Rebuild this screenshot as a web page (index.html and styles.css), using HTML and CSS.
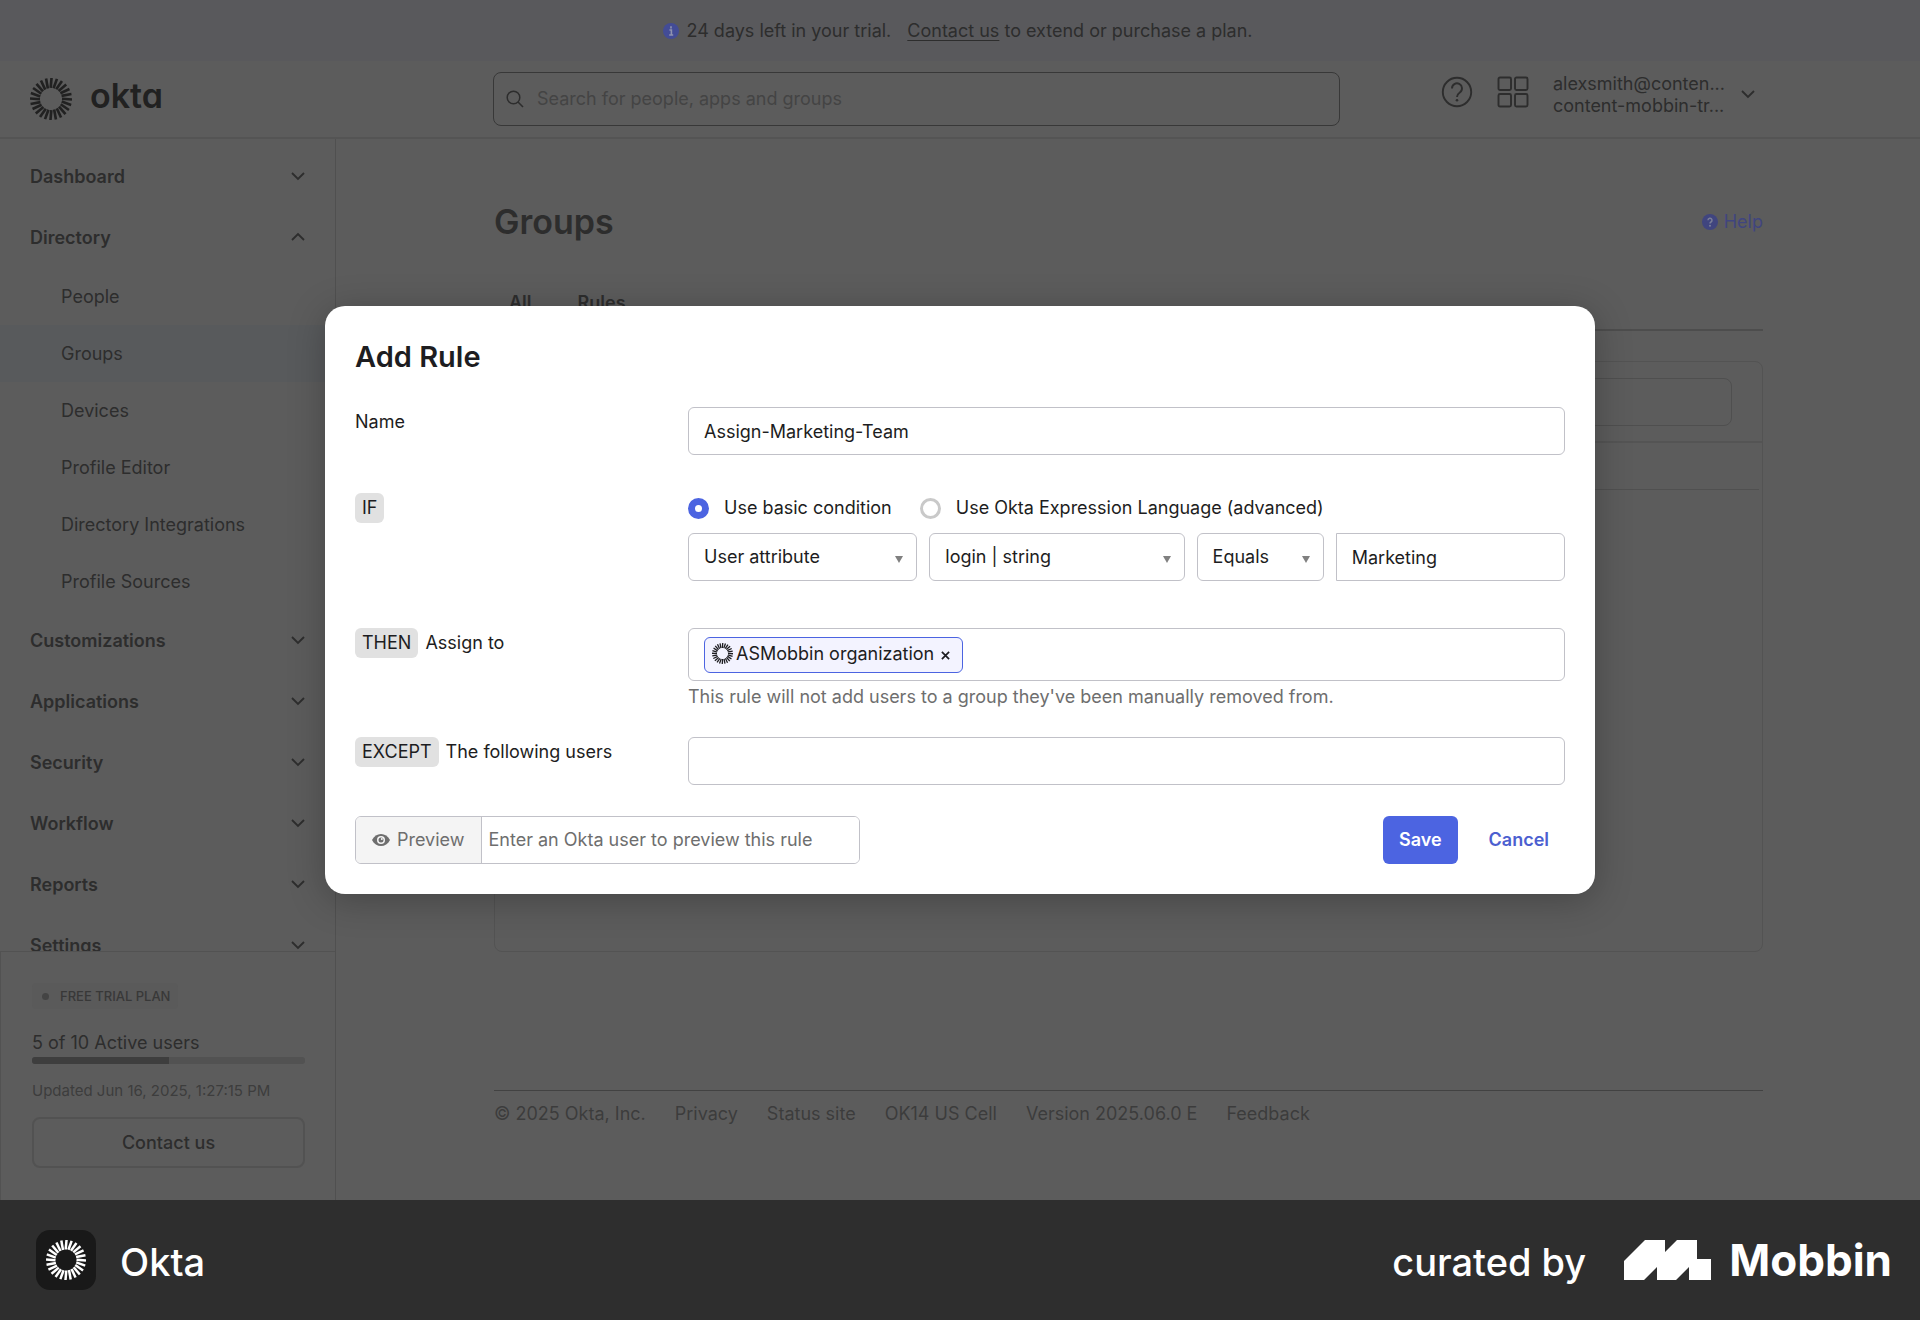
FILE: index.html
```html
<!DOCTYPE html>
<html lang="en">
<head>
<meta charset="utf-8">
<title>Groups - Okta</title>
<link rel="stylesheet" href="styles.css">
</head>
<body>
<svg class="defs" width="0" height="0" aria-hidden="true">
  <defs>
    <g id="ray"><path d="M20.500 0L19.700 9.500" fill="none" stroke="currentColor" stroke-width="2.500"/></g>
    <g id="rays"><use href="#ray"/><use href="#ray" transform="rotate(15 20 20)"/><use href="#ray" transform="rotate(30 20 20)"/><use href="#ray" transform="rotate(45 20 20)"/><use href="#ray" transform="rotate(60 20 20)"/><use href="#ray" transform="rotate(75 20 20)"/></g>
    <symbol id="sun" viewBox="0 0 40 40">
      <use href="#rays"/><use href="#rays" transform="rotate(90 20 20)"/><use href="#rays" transform="rotate(180 20 20)"/><use href="#rays" transform="rotate(270 20 20)"/>
    </symbol>
    <symbol id="down" viewBox="0 0 14 14"><path d="M1 3l6 6 6-6" fill="none" stroke="currentColor" stroke-width="1.800"/></symbol>
    <symbol id="up" viewBox="0 0 14 14"><path d="M1 9l6-6 6 6" fill="none" stroke="currentColor" stroke-width="1.800"/></symbol>
  </defs>
</svg>
<div class="screen">
  <div class="app">
    <div class="banner">
      <svg class="banner-icon" viewBox="0 0 16 16"><circle cx="8" cy="8" r="8" fill="currentColor"/><path d="M8 3.200v2.200M6.400 7H8.400v5M6.200 12h4" stroke="#8f93b0" stroke-width="1.600" fill="none"/></svg>
      <span>24 days left in your trial.</span>
      <span class="banner-more"><a href="#">Contact us</a> to extend or purchase a plan.</span>
    </div>
    <header class="header">
      <a class="brand" href="#"><svg class="brand-mark"><use href="#sun"/></svg><span class="brand-name">okta</span></a>
      <div class="search">
        <svg class="search-icon" viewBox="0 0 18 18"><circle cx="7.500" cy="7.500" r="6.300" fill="none" stroke="currentColor" stroke-width="1.500"/><path d="M12 12l5 5" stroke="currentColor" stroke-width="1.600"/></svg>
        <input type="text" aria-label="Search" placeholder="Search for people, apps and groups">
      </div>
      <div class="tools">
        <button class="tool" aria-label="Help"><svg class="tool-icon" viewBox="0 0 32 32"><circle cx="16" cy="16" r="14.200" fill="none" stroke="currentColor" stroke-width="1.900"/><path d="M11 12.500a5 5 0 1 1 7.800 4c-2 1.400-2.800 2.200-2.800 4.500" fill="none" stroke="currentColor" stroke-width="1.900"/><circle cx="16" cy="24.300" r="1.300" fill="currentColor"/></svg></button>
        <button class="tool" aria-label="Apps"><svg class="tool-icon" viewBox="0 0 32 32" fill="none" stroke="currentColor" stroke-width="1.900"><rect x="1.500" y="1.500" width="12.500" height="12.500" rx="1.500"/><rect x="18" y="1.500" width="12.500" height="12.500" rx="1.500"/><rect x="1.500" y="18" width="12.500" height="12.500" rx="1.500"/><rect x="18" y="18" width="12.500" height="12.500" rx="1.500"/></svg></button>
        <button class="account"><span class="account-text"><span>alexsmith@conten...</span><span>content-mobbin-tr...</span></span><svg class="chev"><use href="#down"/></svg></button>
      </div>
    </header>
    <div class="body">
      <aside class="sidebar">
        <nav class="nav">
          <button class="nav-top">Dashboard<svg class="chev"><use href="#down"/></svg></button>
          <button class="nav-top">Directory<svg class="chev"><use href="#up"/></svg></button>
          <a class="nav-sub" href="#">People</a>
          <a class="nav-sub active" href="#">Groups</a>
          <a class="nav-sub" href="#">Devices</a>
          <a class="nav-sub" href="#">Profile Editor</a>
          <a class="nav-sub" href="#">Directory Integrations</a>
          <a class="nav-sub" href="#">Profile Sources</a>
          <button class="nav-top">Customizations<svg class="chev"><use href="#down"/></svg></button>
          <button class="nav-top">Applications<svg class="chev"><use href="#down"/></svg></button>
          <button class="nav-top">Security<svg class="chev"><use href="#down"/></svg></button>
          <button class="nav-top">Workflow<svg class="chev"><use href="#down"/></svg></button>
          <button class="nav-top">Reports<svg class="chev"><use href="#down"/></svg></button>
          <button class="nav-top">Settings<svg class="chev"><use href="#down"/></svg></button>
        </nav>
        <section class="plan">
          <div class="plan-chip"><i class="dot"></i>FREE TRIAL PLAN</div>
          <div class="plan-users">5 of 10 Active users</div>
          <div class="meter"><div class="meter-fill" style="width:50%"></div></div>
          <div class="plan-date">Updated Jun 16, 2025, 1:27:15 PM</div>
          <button class="plan-btn">Contact us</button>
        </section>
      </aside>
      <main class="main">
        <div class="title-row">
          <h1>Groups</h1>
          <a class="help" href="#"><svg class="help-icon" viewBox="0 0 16 16"><circle cx="8" cy="8" r="8" fill="currentColor"/><path d="M6 6.300a2 2 0 1 1 3 1.700c-.8.500-1 .8-1 1.600" fill="none" stroke="#7a7e98" stroke-width="1.500"/><circle cx="8" cy="11.700" r="1" fill="#7a7e98"/></svg>Help</a>
        </div>
        <div class="tabs"><a href="#">All</a><a href="#">Rules</a></div>
        <section class="list">
          <div class="list-tools"><input type="text" aria-label="Search rules"></div>
          <div class="list-head"></div>
        </section>
        <footer class="foot"><span>© 2025 Okta, Inc.</span><a href="#">Privacy</a><a href="#">Status site</a><span>OK14 US Cell</span><span>Version 2025.06.0 E</span><a href="#">Feedback</a></footer>
      </main>
    </div>
  </div>
  <div class="overlay">
    <form class="modal" role="dialog" aria-labelledby="rule-title">
      <h2 id="rule-title">Add Rule</h2>
      <div class="row row-name">
        <label class="row-label" for="name">Name</label>
        <input class="field" id="name" type="text" value="Assign-Marketing-Team">
      </div>
      <div class="row row-if">
        <div class="row-label"><span class="key">IF</span></div>
        <div class="stack">
          <div class="radios">
            <label><input type="radio" name="cond" checked>Use basic condition</label>
            <label><input type="radio" name="cond">Use Okta Expression Language (advanced)</label>
          </div>
          <div class="conds">
            <select class="field" aria-label="Attribute type"><option>User attribute</option></select>
            <select class="field" aria-label="Attribute"><option>login | string</option></select>
            <select class="field" aria-label="Operator"><option>Equals</option></select>
            <input class="field field-value" type="text" aria-label="Value" value="Marketing">
          </div>
        </div>
      </div>
      <div class="row row-then">
        <div class="row-label"><span class="key">THEN</span><label for="groups">Assign to</label></div>
        <div class="stack">
          <div class="field tagbox">
            <span class="tag"><svg class="tag-mark"><use href="#sun"/></svg>ASMobbin organization<button type="button" class="tag-x" aria-label="Remove"><svg viewBox="0 0 10 10"><path d="M1 1l8 8M9 1l-8 8" stroke="currentColor" stroke-width="1.900"/></svg></button></span>
            <input id="groups" type="text">
          </div>
          <p class="hint">This rule will not add users to a group they've been manually removed from.</p>
        </div>
      </div>
      <div class="row row-except">
        <div class="row-label"><span class="key">EXCEPT</span><label for="except">The following users</label></div>
        <input class="field" id="except" type="text">
      </div>
      <div class="actions">
        <div class="preview">
          <button type="button"><svg class="eye" viewBox="0 0 18 12"><path d="M0 6C2 2 5.300 0 9 0s7 2 9 6c-2 4-5.300 6-9 6S2 10 0 6z" fill="currentColor"/><circle cx="9" cy="6" r="4" fill="#f4f4f4"/><circle cx="9" cy="6" r="2.500" fill="currentColor"/><circle cx="9.800" cy="5" r="1" fill="#f4f4f4"/></svg>Preview</button>
          <input type="text" aria-label="Preview user" placeholder="Enter an Okta user to preview this rule">
        </div>
        <div class="buttons"><button type="button" class="save">Save</button><button type="button" class="cancel">Cancel</button></div>
      </div>
    </form>
  </div>
</div>
<div class="credit">
  <div class="credit-app"><span class="credit-icon"><svg><use href="#sun"/></svg></span><span class="credit-text">Okta</span></div>
  <div class="credit-by"><span class="credit-text">curated by</span><svg class="mobbin" viewBox="0 0 87 40"><path d="M0 21L21 0H41V12L53 0H73V19H87V40H65V27L52 40H33V27L20 40H0z" fill="#fff"/></svg><strong>Mobbin</strong></div>
</div>
</body>
</html>
```
FILE: styles.css
```css
* { box-sizing: border-box; }
body {
  margin: 0;
  min-height: 100vh;
  display: flex;
  flex-direction: column;
  font-family: Inter, "Liberation Sans", sans-serif;
  font-size: 18px;
  line-height: 22px;
  color: #1d1d21;
  background: #2e2e2e;
}
button, input, select { font: inherit; color: inherit; margin: 0; }
button { border: 0; background: none; padding: 0; }
a { color: inherit; text-decoration: none; }
h1, h2, p { margin: 0; }
svg { display: block; flex: none; }
.defs { position: absolute; }

.screen { position: relative; flex: 1; display: flex; }
.app { flex: 1; min-width: 0; display: flex; flex-direction: column; background: #5c5c5c; color: #2d2d2d; }

.banner { height: 61px; display: flex; align-items: center; justify-content: center; padding-right: 4px; background: #59595c; }
.banner-icon { width: 16px; height: 16px; margin-right: 7px; color: #434c96; }
.banner-more { margin-left: 16px; }
.banner a { text-decoration: underline; text-underline-offset: 3px; }

.header { height: 78px; display: grid; grid-template-columns: 463px minmax(0, 847px) 1fr; align-items: center; padding: 0 157px 0 30px; border-bottom: 2px solid #545454; }
.brand { display: flex; align-items: center; gap: 18px; color: #212121; }
.brand-mark { width: 42px; height: 42px; }
.brand-name { font-size: 34px; font-weight: 600; line-height: 36px; padding-bottom: 6px; font-feature-settings: "cv11"; }
.search { display: flex; align-items: center; gap: 13px; height: 54px; padding: 0 12px; border: 1px solid #383838; border-radius: 8px; }
.search-icon { width: 18px; height: 18px; }
.search input { flex: 1; min-width: 0; border: 0; background: none; padding: 0; outline: 0; }
.search input::placeholder { color: #444; opacity: 1; }
.tools { display: flex; justify-content: flex-end; align-items: center; padding: 0 8px 14px 0; }
.tool { margin-right: 24px; }
.tool-icon { width: 32px; height: 32px; }
.account { display: flex; align-items: center; gap: 16px; text-align: left; padding-top: 6px; }
.account-text { display: flex; flex-direction: column; }
.chev { width: 14px; height: 14px; }

.body { flex: 1; display: flex; min-height: 0; }
.sidebar { width: 336px; flex: none; display: flex; flex-direction: column; border-right: 1px solid #505050; }
.nav { flex: 1 1 0; min-height: 0; overflow: hidden; padding-top: 7px; }
.nav-top { display: flex; align-items: center; justify-content: space-between; width: 100%; height: 61px; padding: 0 30px; font-weight: 600; }
.nav-sub { display: flex; align-items: center; height: 57px; padding-left: 61px; }
.nav-sub.active { background: #585a5c; }
.plan { border: 1px solid #525252; border-width: 1px 0 0 1px; padding: 31px 30px 32px 31px; }
.plan-chip { display: flex; width: fit-content; align-items: center; gap: 11px; height: 26px; padding: 0 8px 0 10px; border-radius: 4px; background: #5a5a5a; font-size: 13px; font-weight: 500; color: #383838; }
.dot { width: 7px; height: 7px; border-radius: 50%; background: #444; }
.plan-users { margin-top: 23px; }
.meter { height: 7px; margin-top: 3px; border-radius: 3px; background: #525252; overflow: hidden; }
.meter-fill { height: 100%; background: #3e3e3e; }
.plan-date { margin-top: 16px; font-size: 15px; color: #3d3d3d; }
.plan-btn { width: 100%; height: 51px; margin-top: 15px; border: 2px solid #525252; border-radius: 8px; font-weight: 500; }

.main { flex: 1; min-width: 0; padding: 0 157px 0 158px; display: flex; flex-direction: column; }
.title-row { display: flex; align-items: center; justify-content: space-between; padding-top: 61px; }
h1 { font-size: 34px; line-height: 44px; font-weight: 600; }
.help { display: flex; align-items: center; gap: 6px; color: #40457f; }
.help-icon { width: 16px; height: 16px; }
.tabs { display: flex; gap: 46px; margin-top: 48px; padding: 0 15px 15px; font-weight: 600; border-bottom: 2px solid #4d4d4d; }
.list { height: 591px; margin-top: 30px; border: 1px solid #535353; border-radius: 8px; }
.list-tools { height: 81px; padding: 16px 30px; border-bottom: 2px solid #545454; }
.list-tools input { display: block; width: 100%; height: 48px; border: 1px solid #4f4f4f; border-radius: 8px; background: none; }
.list-head { height: 47px; margin-right: 3px; border-bottom: 1px solid #505050; }
.foot { display: flex; gap: 29px; margin-top: 138px; padding-top: 12px; border-top: 1px solid #424242; color: #3c3c3c; }

.overlay { position: absolute; inset: 0; display: flex; align-items: center; justify-content: center; }
.modal { width: 1270px; max-width: 96%; padding: 30px; border-radius: 20px; background: #fff; box-shadow: 0 6px 36px rgba(0, 0, 0, .25); }
h2 { font-size: 29px; line-height: 42px; font-weight: 600; }
.row { display: grid; grid-template-columns: 333px minmax(0, 1fr); align-items: start; }
.row-label { display: flex; align-items: center; gap: 7px; height: 30px; }
.key { display: flex; align-items: center; height: 30px; padding: 0 7px; border-radius: 6px; background: #e1e1e1; }
.field { width: 100%; height: 48px; padding: 0 15px; border: 1px solid #c1c1c8; border-radius: 6px; background-color: #fff; outline: 0; }
.row-name { margin-top: 29px; }
.row-if { margin-top: 38px; }
.row-then { margin-top: 47px; }
.row-except { margin-top: 29px; }
.radios { display: flex; gap: 28px; height: 30px; }
.radios label { display: flex; align-items: center; gap: 15px; }
.radios input { appearance: none; width: 21px; height: 21px; border: 3px solid #c9c9c9; border-radius: 50%; }
.radios input:checked { border: 7px solid #4c64e1; }
.conds { display: grid; grid-template-columns: 229fr 255fr 127fr 229fr; gap: 12px; margin-top: 10px; }
select.field {
  appearance: none;
  background-image: url("data:image/svg+xml,%3Csvg xmlns='http://www.w3.org/2000/svg' viewBox='0 0 8 7'%3E%3Cpath d='M0 0h8L4 7z' fill='%23808080'/%3E%3C/svg%3E");
  background-size: 8px 7px;
  background-repeat: no-repeat;
  background-position: right 13px top 22px;
}
.field-value { border-radius: 0 6px 6px 0; }
.tagbox { display: flex; align-items: center; height: 53px; }
.tagbox input { flex: 1; min-width: 0; border: 0; outline: 0; background: none; }
.tag { display: flex; align-items: center; height: 36px; padding: 0 12px 2px 7px; border: 1px solid #4c64e1; border-radius: 6px; background: #f3f3ff; }
.tag-mark { width: 21px; height: 21px; margin-right: 3px; }
.tag-x { margin-left: 7px; padding-top: 4px; }
.tag-x svg { width: 9px; height: 9px; }
.hint { margin-top: 5px; color: #6e6e6e; }
.actions { display: flex; justify-content: space-between; margin-top: 31px; }
.preview { display: flex; width: 505px; height: 48px; border: 1px solid #c1c1c8; border-radius: 6px; overflow: hidden; color: #6e6e6e; }
.preview button { display: flex; align-items: center; gap: 7px; padding: 0 16px; background: #f4f4f4; border-right: 1px solid #c1c1c8; }
.eye { width: 18px; height: 12px; }
.preview input { flex: 1; min-width: 0; padding: 0 7px; border: 0; outline: 0; }
.preview input::placeholder { color: #6e6e6e; opacity: 1; }
.buttons { display: flex; gap: 15px; font-weight: 600; }
.save { height: 48px; padding: 0 16px; border-radius: 6px; background: #4c64e1; color: #fff; }
.cancel { height: 48px; padding: 0 16px; color: #4c5fd0; }

.credit { display: flex; align-items: center; justify-content: space-between; height: 120px; padding: 0 28px 0 36px; color: #fff; font-size: 38px; line-height: 48px; font-weight: 500; }
.credit-app, .credit-by { display: flex; align-items: center; }
.credit-app { gap: 24px; }
.credit-text { padding-top: 4px; }
.credit-icon { display: flex; align-items: center; justify-content: center; width: 60px; height: 60px; border-radius: 14px; background: #191919; }
.credit-icon svg { width: 40px; height: 40px; }
.mobbin { width: 87px; height: 40px; margin: 0 18px 0 38px; }
.credit strong { font-size: 44px; font-weight: 700; }
```
